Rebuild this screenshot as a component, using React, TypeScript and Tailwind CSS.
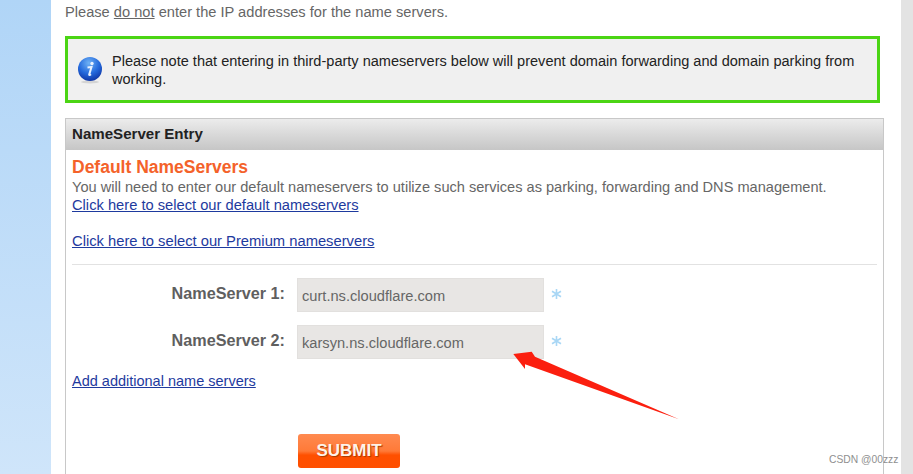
function Star() {
  return (
    <svg width="11" height="12" viewBox="0 0 11 12" className="ml-[7px] mb-[2px] shrink-0" stroke="#a9d7f5" strokeWidth="1.6">
      <path d="M5.5 1 V11 M1 3.2 L10 8.8 M10 3.2 L1 8.8" />
    </svg>
  );
}

export default function App() {
  return (
    <div className="relative flex h-[474px] w-[913px] overflow-hidden bg-white font-['Liberation_Sans',Arial,sans-serif] text-[14.65px]">
      <div className="w-[51px] shrink-0 bg-gradient-to-b from-[#b0d5f7] to-[#cfe5fa]" />
      <main className="w-[833px] shrink-0 pl-[14px]">
        <p className="h-[36px] pt-[4px] leading-[16px] text-[#666666]">
          Please <span className="underline">do not</span> enter the IP addresses for the name servers.
        </p>
        <div className="flex h-[67px] w-[815px] items-center border-[3px] border-[#4bd514] bg-[#f0f0f0] pl-[9px]">
          <svg width="26" height="28" viewBox="0 0 26 28" className="shrink-0">
            <defs>
              <radialGradient id="info" cx="45%" cy="25%" r="80%">
                <stop offset="0%" stopColor="#6fb2f5" />
                <stop offset="55%" stopColor="#2469dc" />
                <stop offset="100%" stopColor="#0d2f9e" />
              </radialGradient>
            </defs>
            <ellipse cx="13" cy="26" rx="9" ry="1.5" fill="#d4d4d4" />
            <circle cx="13" cy="13" r="12" fill="url(#info)" />
            <circle cx="15" cy="7.5" r="1.7" fill="#e8f2ff" />
            <path d="M10.5 11.5 L14.5 11 L12.2 18.6 Q12 19.6 14 18.2" fill="none" stroke="#e8f2ff" strokeWidth="2" />
          </svg>
          <p className="ml-[9px] w-[770px] text-[14.55px] leading-[18px] text-[#222222]">
            Please note that entering in third-party nameservers below will prevent domain forwarding and domain parking from working.
          </p>
        </div>
        <section className="mt-[15px] h-[400px] w-[819px] border border-[#c8c8c8]">
          <h2 className="flex h-[31px] items-center bg-gradient-to-b from-[#ececec] to-[#c6c6c6] pl-[6px] text-[15.1px] font-bold text-[#222222]">
            NameServer Entry
          </h2>
          <div className="px-[6px] pt-[7px]">
            <h3 className="text-[17.5px] font-bold leading-[20px] text-[#f4622a]">Default NameServers</h3>
            <p className="mt-[1px] text-[14.6px] leading-[18px] text-[#666666]">
              You will need to enter our default nameservers to utilize such services as parking, forwarding and DNS management.
            </p>
            <a className="block text-[14.7px] leading-[18px] text-[#1e3a9e] underline">Click here to select our default nameservers</a>
            <a className="mt-[18px] block text-[14.75px] leading-[18px] text-[#1e3a9e] underline">Click here to select our Premium nameservers</a>
            <hr className="mt-[14px] border-[#e2e2e2]" />
            <div className="mt-[13px] flex h-[34px] items-center">
              <label className="w-[213px] pb-[3px] text-right text-[16.2px] font-bold text-[#5f5f5f]">NameServer 1:</label>
              <div className="ml-[12px] flex h-[34px] w-[247px] items-center border border-[#e2e0de] bg-[#e8e6e4] pl-[4px] pt-[4px] text-[#666666]">curt.ns.cloudflare.com</div>
              <Star />
            </div>
            <div className="mt-[13px] flex h-[34px] items-center">
              <label className="w-[213px] pb-[3px] text-right text-[16.2px] font-bold text-[#5f5f5f]">NameServer 2:</label>
              <div className="ml-[12px] flex h-[34px] w-[247px] items-center border border-[#e2e0de] bg-[#e8e6e4] pl-[4px] pt-[4px] text-[#666666]">karsyn.ns.cloudflare.com</div>
              <Star />
            </div>
            <a className="mt-[13px] block text-[14.5px] leading-[18px] text-[#1e3a9e] underline">Add additional name servers</a>
            <button className="ml-[226px] mt-[44px] flex h-[34px] w-[102px] items-center justify-center rounded-[3px] bg-[linear-gradient(#ff8a50_0%,#ff7a38_50%,#ff5000_62%,#ff4f00_100%)] text-[17px] font-bold text-[#fdf3ea] [text-shadow:1px_1px_1px_#a83a00]">
              SUBMIT
            </button>
          </div>
        </section>
      </main>
      <div className="ml-auto w-[12px] shrink-0 bg-[#e3e3e3]" />
      <svg className="absolute left-0 top-0" width="913" height="474" viewBox="0 0 913 474">
        <polygon points="513.3,354 531.7,351.7 535,356.7 679,419.3 525,364.3 525,369" fill="#fb1f0f" />
      </svg>
      <span className="absolute left-[829px] top-[453px] text-[10.3px] leading-[14px] text-[#8f8f8f]">CSDN @00zzz</span>
    </div>
  );
}
